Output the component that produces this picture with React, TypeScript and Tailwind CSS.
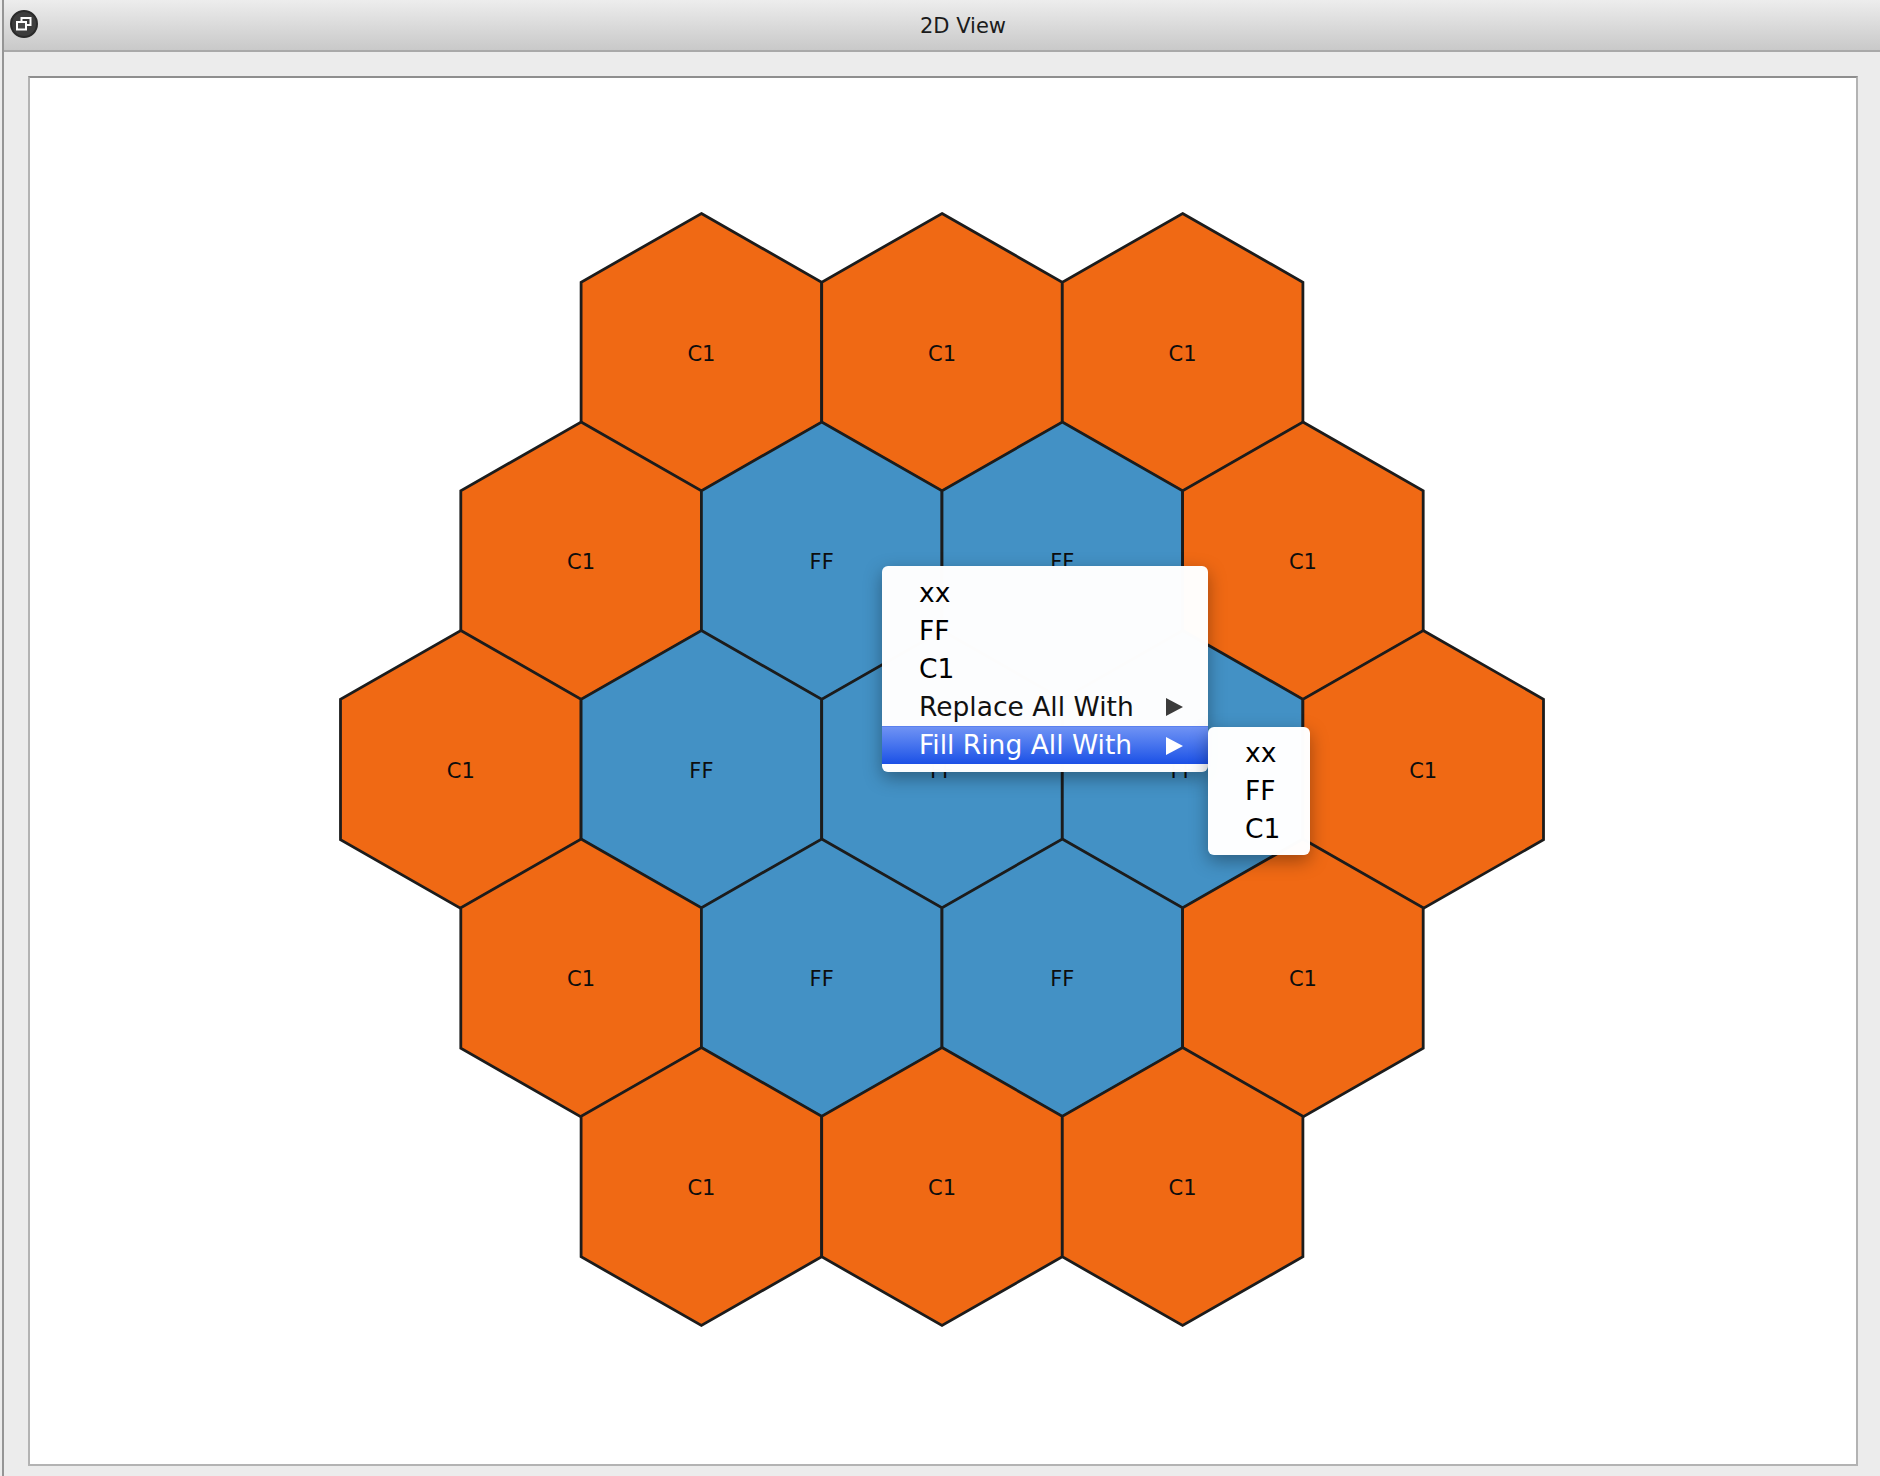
import React from "react";

const R = 139;
const W = 240.6;
const S = 208.5;
const CX = 942;
const CY = 769.5;

type Hex = { x: number; y: number; ring: number };

function hexes(): Hex[] {
  const out: Hex[] = [];
  for (let r = -2; r <= 2; r++) {
    for (let q = Math.max(-2, -r - 2); q <= Math.min(2, -r + 2); q++) {
      const ring = Math.max(Math.abs(q), Math.abs(r), Math.abs(q + r));
      out.push({ x: CX + (q + r / 2) * W, y: CY + r * S, ring });
    }
  }
  return out;
}

function points(x: number, y: number) {
  const hw = W / 2;
  const pts: [number, number][] = [
    [x, y - R],
    [x + hw, y - R / 2 - 0.75],
    [x + hw, y + R / 2 + 0.75],
    [x, y + R],
    [x - hw, y + R / 2 + 0.75],
    [x - hw, y - R / 2 - 0.75],
  ];
  return pts.map(([a, b]) => `${a.toFixed(2)},${b.toFixed(2)}`).join(" ");
}

const menuFont = { fontFamily: '"DejaVu Sans", "Liberation Sans", sans-serif' };

function Arrow({ white }: { white?: boolean }) {
  return (
    <svg width="17" height="18" viewBox="0 0 17 18" className="shrink-0">
      <polygon points="0,0 17,9 0,18" fill={white ? "#ffffff" : "#3b3b3b"} />
    </svg>
  );
}

export default function App() {
  const hs = hexes();
  return (
    <div className="relative w-[1880px] h-[1476px] bg-[#ececec] overflow-hidden pl-[2px]">
      <div className="h-full border-l-2 border-[#959595] flex flex-col">
        {/* title bar */}
        <div className="h-[52px] shrink-0 border-b-2 border-[#a9a9a9] bg-gradient-to-b from-[#ededed] to-[#c9c9c9] flex items-center relative">
          <div className="absolute left-[6px] top-[10px] w-[28px] h-[28px] rounded-full bg-[#3d3d3d] border-2 border-[#2a2a2a] flex items-center justify-center">
            <svg width="16" height="14" viewBox="0 0 16 14">
              <rect x="5.5" y="1" width="9" height="7" fill="none" stroke="#ffffff" strokeWidth="2" />
              <rect x="1" y="5" width="9" height="7.5" fill="#4a4a4a" stroke="#ffffff" strokeWidth="2" />
            </svg>
          </div>
          <div className="flex-1 flex justify-center pl-[42px] pt-[2px]">
            <span className="text-[21px] text-[#1b1b1b] leading-none" style={menuFont}>2D View</span>
          </div>
        </div>
        {/* content */}
        <div className="flex-1 pt-[24px] pl-[24px] pr-[22px] pb-[10px]">
          <div className="w-[1830px] h-[1390px] bg-white border-2 border-[#b3b3b3] border-t-[#8e8e8e]">
            <svg width="1826" height="1386" viewBox="30 78 1826 1386" className="block">
              {hs.map((h, i) => (
                <g key={i}>
                  <polygon
                    points={points(h.x, h.y)}
                    fill={h.ring === 2 ? "#f06914" : "#4391c5"}
                    stroke="#1c1c1c"
                    strokeWidth="2.8"
                    strokeLinejoin="miter"
                  />
                  <text
                    x={h.x}
                    y={h.y + 8}
                    textAnchor="middle"
                    fontSize="21"
                    fill="#0d0d0d"
                    fontFamily='"DejaVu Sans", "Liberation Sans", sans-serif'
                  >
                    {h.ring === 2 ? "C1" : "FF"}
                  </text>
                </g>
              ))}
            </svg>
          </div>
        </div>
      </div>

      {/* context menu */}
      <div
        className="absolute left-[882px] top-[566px] w-[326px] h-[206px] bg-white/[0.985] rounded-[6px] shadow-[0_6px_18px_rgba(0,0,0,0.35)] py-[8px] text-[26.5px] text-black"
        style={menuFont}
      >
        <div className="h-[38px] flex items-center pl-[37px] leading-none">xx</div>
        <div className="h-[38px] flex items-center pl-[37px] leading-none">FF</div>
        <div className="h-[38px] flex items-center pl-[37px] leading-none">C1</div>
        <div className="h-[38px] flex items-center pl-[37px] pr-[25px] justify-between leading-none text-[#111]">
          <span>Replace All With</span>
          <Arrow />
        </div>
        <div className="h-[38px] flex items-center pl-[37px] pr-[25px] justify-between leading-none text-white bg-gradient-to-b from-[#6f92f4] to-[#1a4fe6] border-t border-[#5a80ee]">
          <span>Fill Ring All With</span>
          <Arrow white />
        </div>
      </div>

      {/* submenu */}
      <div
        className="absolute left-[1208px] top-[727px] w-[102px] h-[128px] bg-white/[0.99] rounded-[6px] shadow-[0_6px_18px_rgba(0,0,0,0.35)] py-[7px] text-[26.5px] text-black"
        style={menuFont}
      >
        <div className="h-[38px] flex items-center pl-[37px] leading-none">xx</div>
        <div className="h-[38px] flex items-center pl-[37px] leading-none">FF</div>
        <div className="h-[38px] flex items-center pl-[37px] leading-none">C1</div>
      </div>
    </div>
  );
}
